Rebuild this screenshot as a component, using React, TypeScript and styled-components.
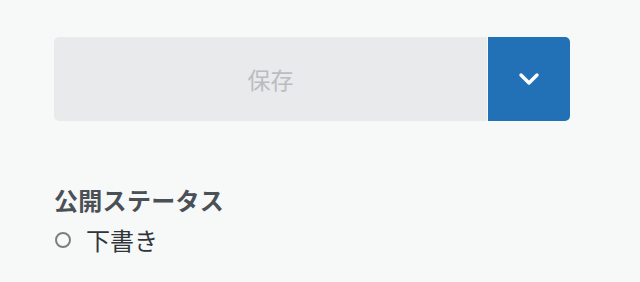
import styled, { createGlobalStyle } from "styled-components";

const GlobalStyle = createGlobalStyle`
    html, body {
        margin: 0;
        padding: 0;
        background: #f7f8f8;
    }
    body {
        font-family: "Noto Sans CJK JP", "Noto Sans", sans-serif;
    }
`;

const Page = styled.div`
    padding: 37px 0 0 54px;
    width: 516px;
`;

const ButtonGroup = styled.div`
    display: flex;
    gap: 1px;
    height: 84px;
`;

const SaveButton = styled.button`
    flex: 1;
    border: 0;
    border-radius: 5px 0 0 5px;
    background: #e8eaec;
    color: #b9bdc1;
    font-family: inherit;
    font-size: 23px;
    cursor: default;
`;

const ToggleButton = styled.button`
    width: 82px;
    border: 0;
    border-radius: 0 5px 5px 0;
    background: #2271b6;
    display: flex;
    align-items: center;
    justify-content: center;
    cursor: pointer;
    svg {
        width: 22px;
        height: 14px;
    }
`;

const Section = styled.section`
    margin-top: 63px;
`;

const Title = styled.h2`
    margin: 0;
    font-size: 24px;
    letter-spacing: 0.3px;
    line-height: 32px;
    font-weight: 700;
    color: #4a5056;
`;

const RadioRow = styled.label`
    display: flex;
    align-items: center;
    gap: 15px;
    margin-top: 8px;
    font-size: 24px;
    line-height: 32px;
    color: #2f353a;
`;

const RadioDot = styled.span`
    width: 12px;
    height: 12px;
    border: 2px solid #7a7f84;
    border-radius: 50%;
    flex: none;
    margin-left: 1px;
`;

function App() {
    return (
        <>
            <GlobalStyle />
            <Page>
                <ButtonGroup>
                    <SaveButton type="button">保存</SaveButton>
                    <ToggleButton type="button" aria-label="公開オプション">
                        <svg viewBox="0 0 22 14" fill="none">
                            <path d="M3 3l8 8 8-8" stroke="#fff" strokeWidth="3.4" strokeLinecap="round" strokeLinejoin="round" />
                        </svg>
                    </ToggleButton>
                </ButtonGroup>
                <Section>
                    <Title>公開ステータス</Title>
                    <RadioRow>
                        <RadioDot />
                        下書き
                    </RadioRow>
                </Section>
            </Page>
        </>
    );
}

export default App;
